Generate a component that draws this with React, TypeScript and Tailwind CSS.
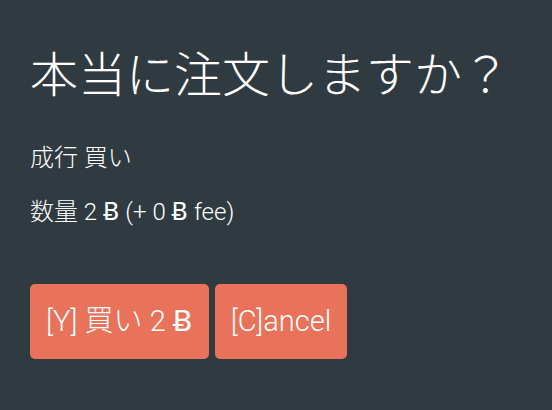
import React from "react";

const B = () => <span style={{ fontFamily: '"DejaVu Sans", sans-serif' }} className="font-normal">Ƀ</span>;

export default function App() {
  return (
    <div
      className="w-full h-[410px] bg-[#2f3a41] px-[30px] pt-[44px] text-white font-light"
      style={{ fontFamily: 'Roboto, "Noto Sans CJK JP", sans-serif' }}
    >
      <h1 className="text-[48px] leading-[64px] font-light">本当に注文しますか？</h1>
      <p className="mt-[34px] text-[24px] leading-[32px]">成行 買い</p>
      <p className="mt-[22px] text-[24px] leading-[32px]">
        数量 2 <B /> (+ 0 <B /> fee)
      </p>
      <div className="mt-[56px] flex gap-[6px]">
        <button className="h-[75px] px-[16px] rounded-[5px] bg-[#e8735a] text-white text-[29px] font-light flex items-center">
          <span>
            [Y] 買い 2 <B />
          </span>
        </button>
        <button className="h-[75px] px-[16px] rounded-[5px] bg-[#e8735a] text-white text-[29px] font-light flex items-center">
          [C]ancel
        </button>
      </div>
    </div>
  );
}
